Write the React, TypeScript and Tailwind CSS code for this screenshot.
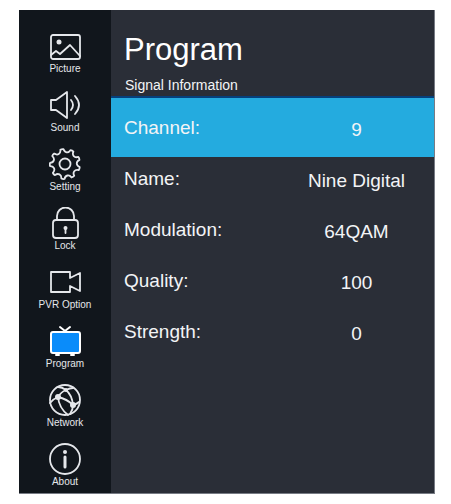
import React from 'react';

const polar = (radius: number, degrees: number) => {
  const a = (degrees * Math.PI) / 180;
  return `${(16 + radius * Math.cos(a)).toFixed(2)} ${(16 + radius * Math.sin(a)).toFixed(2)}`;
};

// nine rounded teeth, 40 degrees apart
const gearPath =
  Array.from({ length: 9 }, (_, i) => {
    const a = i * 40 - 102;
    return `${i === 0 ? 'M' : 'L'}${polar(15, a - 6)} Q${polar(15.5, a)} ${polar(15, a + 6)} C${polar(11, a + 10)} ${polar(11, a + 30)} ${polar(15, a + 34)}`;
  }).join(' ') + 'Z';

const menu = [
  {
    label: 'Picture',
    icon: (
      <>
        <rect x="2" y="5" width="29" height="24" rx="2" />
        <circle cx="10" cy="12" r="2.5" fill="currentColor" stroke="none" />
        <path d="M2 25l5-4 4 3 10-9 10 11" />
      </>
    ),
  },
  {
    label: 'Sound',
    icon: (
      <>
        <path d="M2 11h5l11-8v26l-11-8H2z" />
        <path d="M22 11q4 5 0 10M26 7q8 9 0 18" />
      </>
    ),
  },
  {
    label: 'Setting',
    icon: (
      <>
        <path d={gearPath} />
        <circle cx="16" cy="16" r="5.5" />
      </>
    ),
  },
  {
    label: 'Lock',
    icon: (
      <>
        <rect x="4" y="13" width="25" height="18" rx="3" />
        <path d="M8 13V9a8 8 0 0 1 17 0v4M16.5 21v5" />
        <circle cx="16.5" cy="21" r="2" fill="currentColor" stroke="none" />
      </>
    ),
  },
  { label: 'PVR Option', icon: <path d="M2 6h19v6l10-5v18l-10-5v6H2z" /> },
  {
    label: 'Program',
    icon: (
      <g stroke="#fff" strokeWidth="2">
        <path d="M16 6l-5-4M16 6l5-4M7 30h3M22 30h3" />
        <rect x="2" y="7" width="29" height="21" rx="2" fill="#0a8cfa" />
      </g>
    ),
  },
  {
    label: 'Network',
    icon: (
      <>
        <circle cx="16" cy="16" r="15" />
        <path d="M9 13Q12 8 17 6Q23 11 24 21Q18 15 9 13ZM17 6Q13 3 9 3M17 6Q21 4 24 4M9 13Q4 15 1 19M9 13Q10 24 19 31M24 21Q28 20 30 18M24 21Q24 26 21 30" />
        <g fill="currentColor" stroke="none">
          <circle cx="17" cy="6" r="2" />
          <circle cx="9" cy="13" r="3" />
          <circle cx="24" cy="21" r="3" />
        </g>
      </>
    ),
  },
  {
    label: 'About',
    icon: (
      <>
        <circle cx="16" cy="16" r="15" />
        <path d="M16 14v10" strokeWidth="3" />
        <circle cx="16" cy="9" r="2" fill="currentColor" stroke="none" />
      </>
    ),
  },
];

const rows = [
  { label: 'Name:', value: 'Nine Digital' },
  { label: 'Modulation:', value: '64QAM' },
  { label: 'Quality:', value: '100' },
  { label: 'Strength:', value: '0' },
];

const InfoRow: React.FC<{ label: string; value: string }> = ({ label, value }) => (
  <>
    <dt className="flex-1">{label}</dt>
    <dd className="w-1/2 pt-1 text-center">{value}</dd>
  </>
);

const App: React.FC = () => {
  return (
    <div className="bg-white pt-[10px] pr-4 pb-[9px] pl-[19px] font-['Liberation_Sans',Arial,sans-serif] text-gray-100">
      <div className="flex border-r border-b border-[#777b84] bg-[#2a2e37]">
        <nav className="flex w-[92px] shrink-0 flex-col gap-[13px] bg-[#11161c] pt-5 pb-1">
          {menu.map(({ label, icon }) => (
            <button
              key={label}
              type="button"
              className="flex flex-col items-center text-[10px] leading-[14px] text-gray-200"
            >
              <svg
                viewBox="0 0 32 32"
                className="h-8 w-8"
                fill="none"
                stroke="currentColor"
                strokeWidth="1.8"
                strokeLinejoin="round"
                strokeLinecap="round"
                aria-hidden="true"
              >
                {icon}
              </svg>
              {label}
            </button>
          ))}
        </nav>

        <main className="min-w-0 flex-1">
          <header className="border-b-2 border-[#06407c] px-[13px] pt-5">
            <h1 className="text-[31px] leading-10 text-white">Program</h1>
            <p className="pt-[5px] pb-px pl-px text-sm leading-5">Signal Information</p>
          </header>
          <dl className="text-[19px] leading-7">
            <div className="flex h-[59px] items-center bg-[#24abdf] pl-[13px]">
              <InfoRow label="Channel:" value="9" />
            </div>
            <div className="flex flex-col gap-[7px]">
              {rows.map((row) => (
                <div key={row.label} className="flex h-11 items-center pl-[13px]">
                  <InfoRow {...row} />
                </div>
              ))}
            </div>
          </dl>
        </main>
      </div>
    </div>
  );
};

export default App;
